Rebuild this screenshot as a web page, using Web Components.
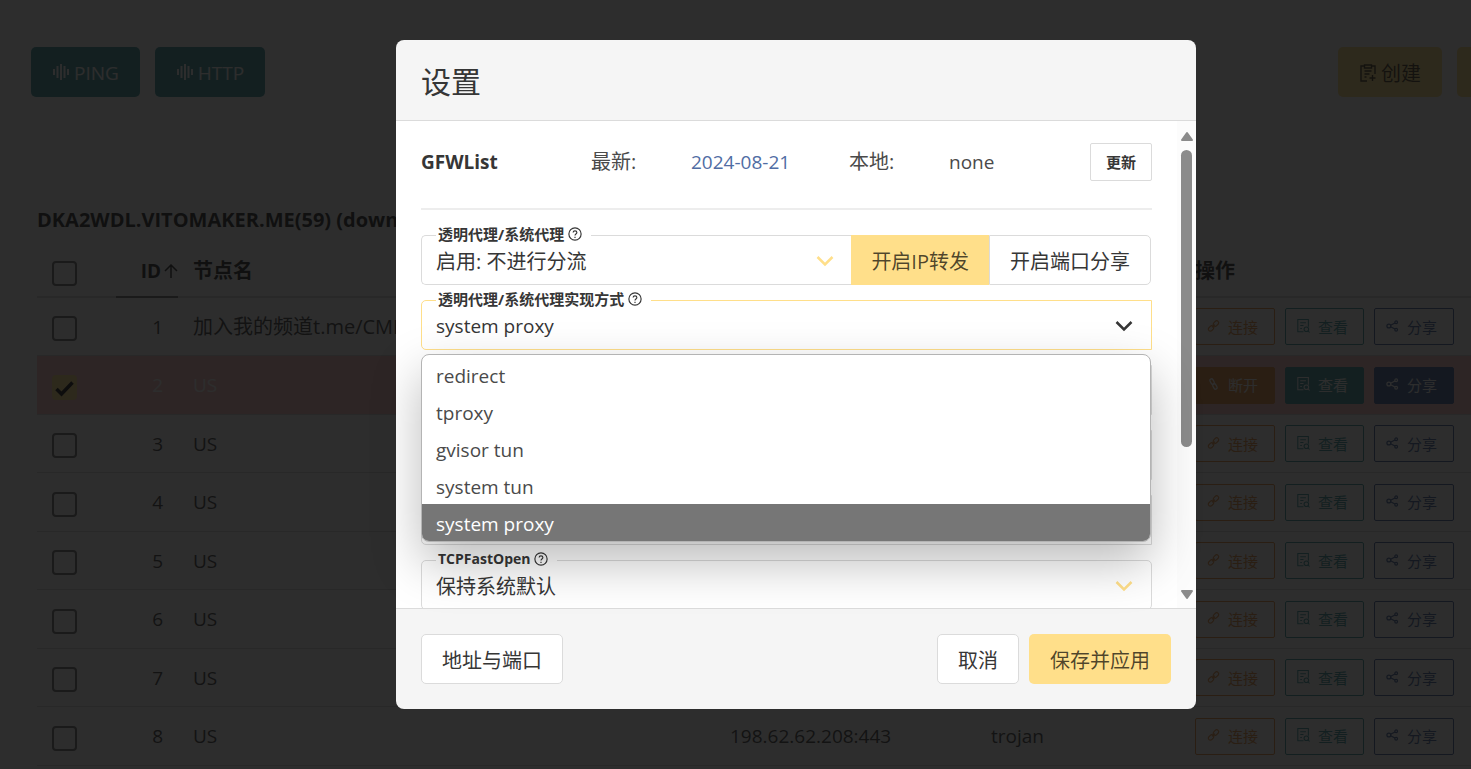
<!DOCTYPE html>
<html lang="zh-CN">
<head>
<meta charset="utf-8">
<title>设置</title>
<style>
html, body { margin: 0; height: 100%; overflow: hidden; background: #fff; }
body {
  font-family: "Open Sans", "Noto Sans CJK SC", sans-serif;
  font-size: 20px; line-height: 30px; color: #4a4a4a;
  --latin: 19px; --primary: #ffdf8a; --teal: #4a9fa5; --orange: #e6954a; --blue: #506da4;
  --line: #dbdbdb; --strong: #363636;
}
</style>
</head>
<body>
<node-page>
  <tool-button slot="left" tone="teal" icon="wave" latin>PING</tool-button>
  <tool-button slot="left" tone="teal" icon="wave" latin>HTTP</tool-button>
  <tool-button slot="right" tone="primary" icon="create">创建</tool-button>
  <tool-button slot="right" tone="primary" name="导入"></tool-button>
  <node-table></node-table>
</node-page>
<modal-layer>
  <span slot="title">设置</span>
  <list-status slot="body"></list-status>
  <select-field slot="body" label="透明代理/系统代理" value="启用: 不进行分流" addons>
    <addon-button slot="addon" active>开启IP转发</addon-button>
    <addon-button slot="addon" last>开启端口分享</addon-button>
  </select-field>
  <select-field slot="body" label="透明代理/系统代理实现方式" value="system proxy" focused latin></select-field>
  <select-field slot="body" value="" square></select-field>
  <select-field slot="body" value="" square></select-field>
  <select-field slot="body" value="" square></select-field>
  <select-field slot="body" label="TCPFastOpen" value="保持系统默认" latin-label></select-field>
  <option-popup slot="popup" items="redirect|tproxy|gvisor tun|system tun|system proxy" selected="4"></option-popup>
  <tool-button slot="foot-left" tone="plain">地址与端口</tool-button>
  <tool-button slot="foot-right" tone="plain">取消</tool-button>
  <tool-button slot="foot-right" tone="primary">保存并应用</tool-button>
</modal-layer>

<script>
const ICONS = {
  wave: '<svg viewBox="0 0 16 18"><path d="M1 6v6M4.500 3v12M8 1v16M11.500 3v12M15 6v6" stroke-width="2"/></svg>',
  create: '<svg viewBox="0 0 16 18"><path d="M4 2H1v15h6M12 2h3v8M4.500 1h7v3h-7zM4.500 7h7M4.500 10h5M4.500 13h2M12.500 11v6M9.500 14h6" stroke-width="1.400"/></svg>',
  link: '<svg viewBox="0 0 16 16"><g transform="rotate(-45 8 8)" stroke-width="1.400"><rect x="0" y="5.500" width="7.500" height="5" rx="2.500"/><rect x="8.500" y="5.500" width="7.500" height="5" rx="2.500"/><path d="M5.500 8h5"/></g></svg>',
  unlink: '<svg viewBox="0 0 16 16"><g transform="rotate(60 8 8)" stroke-width="1.600"><rect x="1" y="6" width="7" height="4" rx="2"/><rect x="8" y="6" width="7" height="4" rx="2"/></g></svg>',
  view: '<svg viewBox="0 0 16 16"><g stroke-width="1.300"><path d="M8 15H1V0h13v9M4 4h7M4 7.500h4M4 11h2"/><circle cx="11.500" cy="12" r="2.800"/><path d="M13.500 14l2 2"/></g></svg>',
  share: '<svg viewBox="0 0 16 16"><g stroke-width="1.500"><circle cx="3.500" cy="8" r="2.400"/><circle cx="12.500" cy="3.500" r="1.700"/><circle cx="12.500" cy="12.500" r="1.700"/><path d="M5.700 7l5.300-2.700M5.700 9l5.300 2.700"/></g></svg>',
  up: '<svg viewBox="0 0 14 14"><path d="M7 14V1M1 7l6-6 6 6" stroke-width="1.500"/></svg>',
  help: '<svg viewBox="0 0 24 24"><circle cx="12" cy="12" r="10.500" stroke-width="2"/><path d="M8.800 9.500c0-4 6.400-4 6.400 0 0 2.500-3.200 2.500-3.200 5M12 16.500v2.200" stroke-width="2"/></svg>',
  chevron: '<svg viewBox="0 0 18 12"><path d="M1.500 2L9 9.500 16.500 2" stroke-width="2.500"/></svg>',
  check: '<svg viewBox="0 0 25 25"><path d="M4.500 14l5 5L20.500 7.500" stroke-width="3.500"/></svg>'
};
const SVG_CSS = 'svg{display:block;flex:none;fill:none;stroke:currentColor}*{box-sizing:border-box}button,select,input{font:inherit;margin:0;color:inherit}';

class Base extends HTMLElement {
  connectedCallback() {
    if (this.shadowRoot) return;
    this.attachShadow({ mode: 'open' }).innerHTML = `<style>${SVG_CSS}${this.css()}</style>${this.html()}`;
  }
}

customElements.define('node-page', class extends Base {
  css() { return `
    :host{display:block;overflow:hidden}
    .page{width:calc(100% + 121px);padding-top:47px}
    .bar{display:flex;justify-content:space-between;padding:0 31px}
    .group{display:flex;gap:15px}`; }
  html() { return `<div class="page"><div class="bar"><div class="group"><slot name="left"></slot></div><div class="group"><slot name="right"></slot></div></div><slot></slot></div>`; }
});

customElements.define('tool-button', class extends Base {
  css() { return `
    :host{display:block}
    button{display:flex;align-items:center;gap:5px;height:50px;min-width:82px;padding:3px 20px 0;border:1px solid transparent;border-radius:5px;white-space:nowrap}
    .primary{background:var(--primary);color:rgba(0,0,0,.7)}
    .teal{background:var(--teal);color:#fff}
    .plain{background:#fff;border-color:var(--line);color:var(--strong)}
    .icon{padding-left:21px}
    .bare{width:104px}
    .latin{font-size:var(--latin);padding-top:1px}
    svg{width:16px;height:18px;margin-bottom:2px}`; }
  html() {
    const i = this.getAttribute('icon'), n = this.getAttribute('name');
    return `<button type="button" ${n ? `aria-label="${n}"` : ''} class="${this.getAttribute('tone')} ${i ? 'icon' : ''} ${n ? 'bare' : ''} ${this.hasAttribute('latin') ? 'latin' : ''}">${i ? ICONS[i] : ''}<slot></slot></button>`;
  }
});

customElements.define('row-button', class extends Base {
  css() { return `
    :host{display:block;--c:var(--orange);--w:80px}
    :host([tone=teal]){--c:var(--teal);--w:79px} :host([tone=blue]){--c:var(--blue)}
    button{display:flex;align-items:center;gap:8px;width:var(--w);height:37px;padding:0 0 0 11px;border:1px solid var(--c);border-radius:2px;background:none;color:var(--c);font-size:15px;line-height:20px;white-space:nowrap}
    :host([solid]) button{background:var(--c);color:#fff}
    svg{width:13px;height:14px;margin-bottom:2px;overflow:visible}`; }
  html() { return `<button type="button">${ICONS[this.getAttribute('icon')]}<slot></slot></button>`; }
});

customElements.define('check-box', class extends Base {
  css() { return `
    :host{display:block;padding-top:4px}
    label{position:relative;display:block;width:25px;height:25px}
    input{appearance:none;display:block;width:25px;height:25px;border:2px solid #7a7a7a;border-radius:4px}
    input:checked{background:var(--primary);border-color:var(--primary)}
    svg{position:absolute;inset:0;color:#1c1c1c;display:none}
    input:checked + svg{display:block}`; }
  html() { return `<label><input type="checkbox" aria-label="选择节点" ${this.hasAttribute('checked') ? 'checked' : ''}>${ICONS.check}</label>`; }
});

customElements.define('node-table', class extends Base {
  css() { return `
    :host{display:block;padding:108px 37px 0}
    h2{margin:0 0 11px;font-size:20px;line-height:30px;font-weight:700;color:var(--strong)}
    table{width:100%;table-layout:fixed;border-collapse:separate;border-spacing:0}
    th,td{padding:0 15px;text-align:left;vertical-align:middle;white-space:nowrap;border-bottom:1px solid var(--line)}
    th{height:52px;border-bottom-width:2px;color:var(--strong);font-weight:700}
    tbody tr{height:58px} tbody tr:nth-child(even){height:59px}
    .c{width:79px}.i{width:62px}.a{width:261px}.p{width:204px}.o{width:375px}
    td.num{text-align:right}
    td{font-size:var(--latin)} td.cjk{font-size:20px}
    th.id{padding:0;border-bottom-color:#7a7a7a}
    .sort{display:flex;align-items:center;justify-content:flex-end;gap:3px;font-size:var(--latin)}
    .sort svg{width:14px;height:14px}
    .on td{background:rgba(255,69,58,.3);color:#fff}
    .acts{display:flex;gap:10px}`; }
  html() {
    const rows = ['加入我的频道t.me/CMLiussss', 'US', 'US', 'US', 'US', 'US', 'US', 'US'];
    return `<h2>DKA2WDL.VITOMAKER.ME(59) (download)</h2>
    <table><colgroup><col class="c"><col class="i"><col><col class="a"><col class="p"><col class="o"></colgroup>
    <thead><tr><th><check-box></check-box></th><th class="id"><div class="sort">ID${ICONS.up}</div></th><th>节点名</th><th></th><th></th><th>操作</th></tr></thead>
    <tbody>${rows.map((n, k) => {
      const on = k === 1, s = on ? 'solid' : '';
      return `<tr class="${on ? 'on' : ''}"><td><check-box ${on ? 'checked' : ''}></check-box></td><td class="num">${k + 1}</td><td class="${k ? '' : 'cjk'}">${n}</td>
      <td>${k === 7 ? '198.62.62.208:443' : ''}</td><td>${k === 7 ? 'trojan' : ''}</td>
      <td><div class="acts"><row-button icon="${on ? 'unlink' : 'link'}" ${s}>${on ? '断开' : '连接'}</row-button><row-button tone="teal" icon="view" ${s}>查看</row-button><row-button tone="blue" icon="share" ${s}>分享</row-button></div></td></tr>`;
    }).join('')}</tbody></table>`;
  }
});

customElements.define('modal-layer', class extends Base {
  css() { return `
    :host{position:fixed;inset:0;display:flex;justify-content:center;align-items:flex-start;padding:40px 0 0 121px;background:rgba(10,10,10,.86);box-sizing:border-box}
    .card{position:relative;display:flex;flex-direction:column;width:800px;max-height:calc(100vh - 100px);border-radius:8px}
    header{background:#f5f5f5;border-bottom:1px solid var(--line);border-radius:8px 8px 0 0;padding:27px 25px 23px}
    h1{margin:0;font-size:30px;line-height:30px;font-weight:400;color:var(--strong)}
    .body{flex:1 1 auto;min-height:0;display:flex;background:#fff;overflow:hidden}
    .content{flex:1;min-width:0;display:flex;flex-direction:column;gap:15px;padding:22px 25px}
    .bar{width:19px;background:#fcfcfc;display:flex;flex-direction:column;align-items:center;padding:10px 0 8px;gap:8px}
    .bar svg{width:14px;height:11px;fill:#8b8b8b;stroke:#8b8b8b;stroke-width:2;stroke-linejoin:round}
    .track{flex:1;width:11px}
    .thumb{height:69%;border-radius:6px;background:#8b8b8b}
    footer{display:flex;justify-content:space-between;background:#f5f5f5;border-top:1px solid var(--line);border-radius:0 0 8px 8px;padding:25px}
    .group{display:flex;gap:10px}`; }
  html() { return `<section class="card" role="dialog" aria-modal="true">
    <header><h1><slot name="title"></slot></h1></header>
    <div class="body"><div class="content"><slot name="body"></slot></div>
      <div class="bar"><svg viewBox="0 0 14 11"><path d="M7 2l5 7H2z"/></svg><div class="track"><div class="thumb"></div></div><svg viewBox="0 0 14 11"><path d="M7 9l5-7H2z"/></svg></div></div>
    <footer><div class="group"><slot name="foot-left"></slot></div><div class="group"><slot name="foot-right"></slot></div></footer>
    <slot name="popup"></slot></section>`; }
});

customElements.define('list-status', class extends Base {
  css() { return `
    :host{display:block;padding-bottom:10px}
    .row{display:grid;grid-template-columns:170px 100px 158px 100px 1fr auto;align-items:center;height:38px}
    b,a,.n{font-size:var(--latin)}
    b{color:var(--strong)}
    a{color:var(--blue);text-decoration:none}
    button{height:38px;width:62px;padding:0;border:1px solid var(--line);border-radius:2px;background:#fff;font-size:15px;font-weight:700;color:var(--strong)}
    hr{height:2px;margin:27px 0 0;border:0;background:#ededed}`; }
  html() { return `<div class="row"><b>GFWList</b><span>最新:</span><a href="#latest">2024-08-21</a><span>本地:</span><span class="n">none</span><button type="button">更新</button></div><hr>`; }
});

customElements.define('select-field', class extends Base {
  css() { return `
    :host{position:relative;display:flex;flex:none;height:50px;--edge:var(--line);--mark:var(--primary)}
    :host([focused]){--edge:var(--primary);--mark:var(--strong)}
    :host([addons]){margin-right:1px}
    .box{position:relative;flex:1;min-width:0}
    select{appearance:none;display:block;width:100%;height:50px;padding:3px 40px 0 14px;border:1px solid var(--edge);border-radius:5px;background:#fff;color:var(--strong);outline:0}
    :host([focused]) select,:host([square]) select,:host([addons]) select{border-radius:5px 0 0 5px}
    :host([addons]) select{border-right:0}
    :host([latin]) select{font-size:var(--latin);padding-top:1px}
    .box svg{position:absolute;right:19px;top:20px;width:18px;height:12px;color:var(--mark);pointer-events:none}
    :host([addons]) .box svg{right:17px}
    label{position:absolute;z-index:1;left:15px;top:-11px;display:flex;align-items:center;gap:4px;padding:0 9px 0 2px;background:#fff;font-size:15px;line-height:20px;font-weight:700;color:var(--strong)}
    :host([latin-label]) label{font-size:14px}
    label svg{width:14px;height:14px}`; }
  html() {
    const l = this.getAttribute('label'), v = this.getAttribute('value');
    return `${l ? `<label for="s">${l}${ICONS.help}</label>` : ''}<div class="box"><select id="s" ${l ? '' : 'aria-label="选项"'}><option>${v}</option></select>${ICONS.chevron}</div><slot name="addon"></slot>`;
  }
});

customElements.define('addon-button', class extends Base {
  css() { return `
    :host{display:block}
    button{height:50px;padding:3px 19px 0;border:1px solid var(--line);border-radius:0;background:#fff;color:var(--strong);white-space:nowrap}
    :host([active]) button{background:var(--primary);border-color:var(--primary);color:rgba(0,0,0,.7)}
    :host([last]) button{border-radius:0 5px 5px 0;padding:3px 20px 0}`; }
  html() { return `<button type="button"><slot></slot></button>`; }
});

customElements.define('option-popup', class extends Base {
  css() { return `
    :host{position:absolute;z-index:2;top:314px;left:25px;right:45px;display:block;padding-top:1px;border:1px solid #b4b4b4;border-radius:8px;background:#fff;box-shadow:0 20px 50px rgba(0,0,0,.27);overflow:hidden;box-sizing:border-box}
    div{height:37px;padding:3px 14px 0;font-size:var(--latin);line-height:34px}
    [aria-selected=true]{background:#767676;color:#fff}`; }
  html() {
    const s = +this.getAttribute('selected');
    return this.getAttribute('items').split('|').map((t, k) => `<div role="option" aria-selected="${k === s}">${t}</div>`).join('');
  }
});
</script>
</body>
</html>
